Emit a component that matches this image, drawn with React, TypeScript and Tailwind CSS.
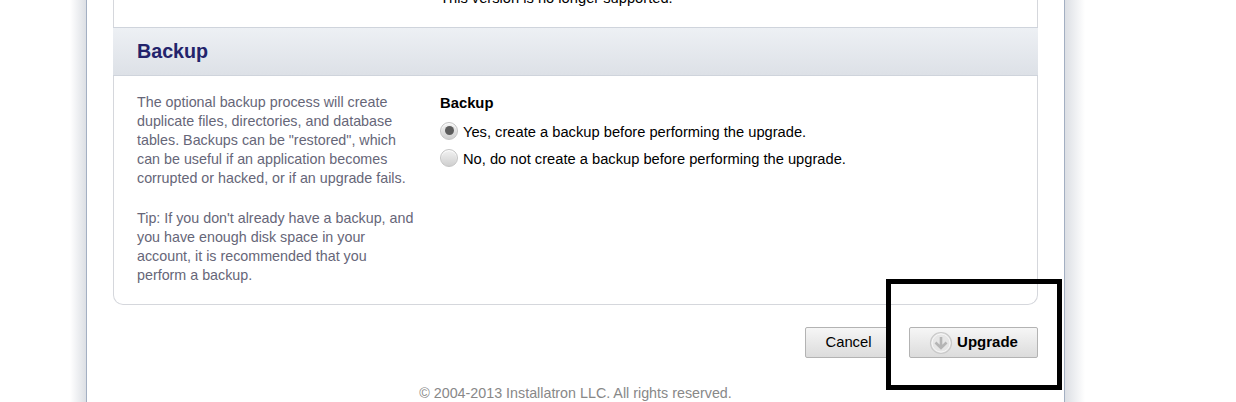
const FONT = 'font-["Liberation_Sans",Arial,sans-serif]';

function Radio({ checked, label }: { checked?: boolean; label: string }) {
  return (
    <label className="flex items-center h-[27px] text-[14.7px] text-black">
      <span className="w-[18px] h-[18px] -mt-[4px] mr-[5px] rounded-full border border-[#c4c4c4] bg-gradient-to-b from-[#f2f2f2] to-[#cfcfcf] flex items-center justify-center shadow-[inset_0_1px_1px_#fff]">
        {checked && <span className="w-[9px] h-[9px] rounded-full bg-[#5c5c5c]" />}
      </span>
      {label}
    </label>
  );
}

function DownIcon() {
  return (
    <svg width="24" height="24" viewBox="0 0 24 24" className="mr-[4px]">
      <circle cx="12" cy="12" r="10.5" fill="#e6e6e6" stroke="#c9c9c9" strokeWidth="1.2" />
      <circle cx="12" cy="12" r="9" fill="none" stroke="#f7f7f7" strokeWidth="1" />
      <path d="M12 6v10.5M6.5 11.5l5.5 5.5 5.5-5.5" fill="none" stroke="#b5b5b5" strokeWidth="2.6" />
    </svg>
  );
}

export default function App() {
  return (
    <div className={`${FONT} relative flex h-[402px] w-[1236px] overflow-hidden bg-white`}>
      <div className="w-[70px] shrink-0" />
      <div className="w-[16px] shrink-0 bg-gradient-to-r from-white to-[#dcdfe4]" />

      <div className="w-[979px] shrink-0 border-x border-[#a3afc2] bg-white">
        <div className="mx-[26px] h-[305px] rounded-b-[10px] border-x border-b border-[#d5d7dc]">
          <div className="flex h-[27px] items-end pb-[20px] pl-[326px] text-[14.7px] leading-[17px] text-black">
            <p className="whitespace-nowrap">This version is no longer supported.</p>
          </div>
          <div className="-mx-px flex h-[49px] items-center border-y border-[#cfd4dc] bg-gradient-to-b from-[#edf0f4] to-[#dde1e7] pl-[24px] text-[19.7px] font-bold text-[#23236b]">
            Backup
          </div>

          <div className="flex pl-[23px] pt-[17px]">
            <div className="w-[303px] shrink-0 pr-[23px] text-[14.3px] leading-[19px] text-[#666678]">
              <p>
                The optional backup process will create duplicate files, directories, and database tables. Backups can be "restored", which can be useful if an application becomes corrupted or hacked, or if an upgrade fails.
              </p>
              <p className="mt-[21px]">
                Tip: If you don't already have a backup, and you have enough disk space in your account, it is recommended that you perform a backup.
              </p>
            </div>
            <div>
              <div className="mb-[6px] text-[14.8px] font-bold leading-[20px] text-black">Backup</div>
              <Radio checked label="Yes, create a backup before performing the upgrade." />
              <Radio label="No, do not create a backup before performing the upgrade." />
            </div>
          </div>
        </div>

        <div className="mx-[26px] mt-[22px] flex justify-end gap-[18px]">
          <button className="flex h-[31px] w-[86px] items-center justify-center rounded-[2px] border border-[#b3b3b3] bg-gradient-to-b from-[#f6f6f6] to-[#dcdcdc] pl-[1px] text-[14.8px] text-black">
            Cancel
          </button>
          <button className="flex h-[31px] w-[129px] items-center justify-center rounded-[2px] border border-[#b3b3b3] bg-gradient-to-b from-[#f6f6f6] to-[#dcdcdc] text-[15px] font-bold text-black">
            <DownIcon />
            Upgrade
          </button>
        </div>

        <p className="mt-[27px] text-center text-[14.3px] leading-[17px] text-[#888]">
          © 2004-2013 Installatron LLC. All rights reserved.
        </p>
      </div>

      <div className="w-[20px] shrink-0 bg-gradient-to-r from-[#dcdfe4] to-white" />

      <div className="absolute left-[886px] top-[279px] h-[111px] w-[176px] border-[5px] border-black" />
    </div>
  );
}
